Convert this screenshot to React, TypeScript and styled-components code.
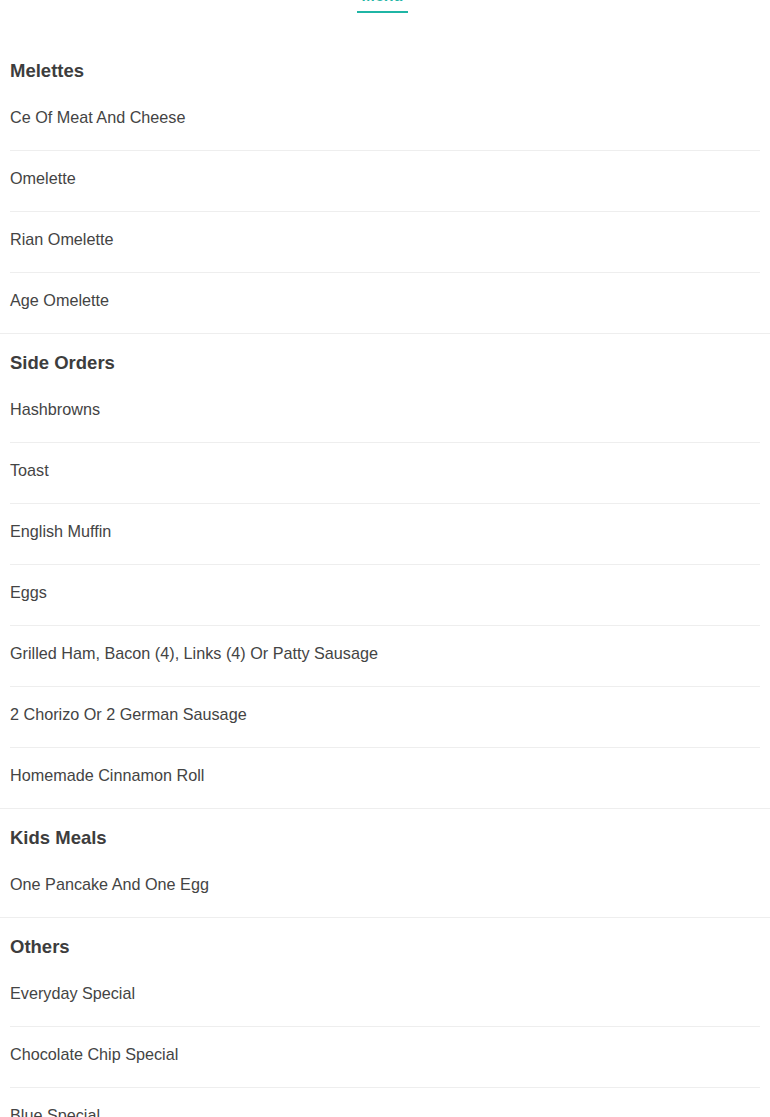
import React from "react";
import styled, { createGlobalStyle } from "styled-components";

const Global = createGlobalStyle`
  html, body { margin: 0; padding: 0; background: #fff; }
  body { font-family: "Liberation Sans", Arial, sans-serif; overflow: hidden; }
`;

const Page = styled.div`
  width: 770px;
`;

const TabBar = styled.nav`
  display: flex;
  justify-content: center;
  margin-top: -14px;
  margin-bottom: 29px;
`;

const Tab = styled.div<{ $active?: boolean }>`
  font-size: 16px;
  line-height: 20px;
  font-weight: bold;
  color: ${(p) => (p.$active ? "#1fb5a5" : "#666")};
  padding: 0 5px 5px;
  margin-right: 5px;
  border-bottom: 2px solid ${(p) => (p.$active ? "#1fb5a5" : "transparent")};
`;

const Section = styled.section`
  border-bottom: 1px solid #eeeeee;
`;

const Heading = styled.h2`
  margin: 0;
  padding: 18px 10px 8px;
  font-size: 18.5px;
  line-height: 22px;
  font-weight: bold;
  color: #3d3d3d;
`;

const List = styled.ul`
  list-style: none;
  margin: 0 10px;
  padding: 0;
`;

const Item = styled.li`
  padding: 17px 0 23px;
  font-size: 16.2px;
  line-height: 20px;
  color: #444;
  border-bottom: 1px solid #eeeeee;
  &:last-child { border-bottom: none; }
`;

const menu: { title: string; items: string[] }[] = [
  {
    title: "Melettes",
    items: ["Ce Of Meat And Cheese", "Omelette", "Rian Omelette", "Age Omelette"],
  },
  {
    title: "Side Orders",
    items: [
      "Hashbrowns",
      "Toast",
      "English Muffin",
      "Eggs",
      "Grilled Ham, Bacon (4), Links (4) Or Patty Sausage",
      "2 Chorizo Or 2 German Sausage",
      "Homemade Cinnamon Roll",
    ],
  },
  { title: "Kids Meals", items: ["One Pancake And One Egg"] },
  {
    title: "Others",
    items: ["Everyday Special", "Chocolate Chip Special", "Blue Special", "Strawberry Special"],
  },
];

export default function App() {
  return (
    <Page>
      <Global />
      <TabBar>
        <Tab $active>Menu</Tab>
      </TabBar>
      {menu.map((s) => (
        <Section key={s.title}>
          <Heading>{s.title}</Heading>
          <List>
            {s.items.map((it) => (
              <Item key={it}>{it}</Item>
            ))}
          </List>
        </Section>
      ))}
    </Page>
  );
}
